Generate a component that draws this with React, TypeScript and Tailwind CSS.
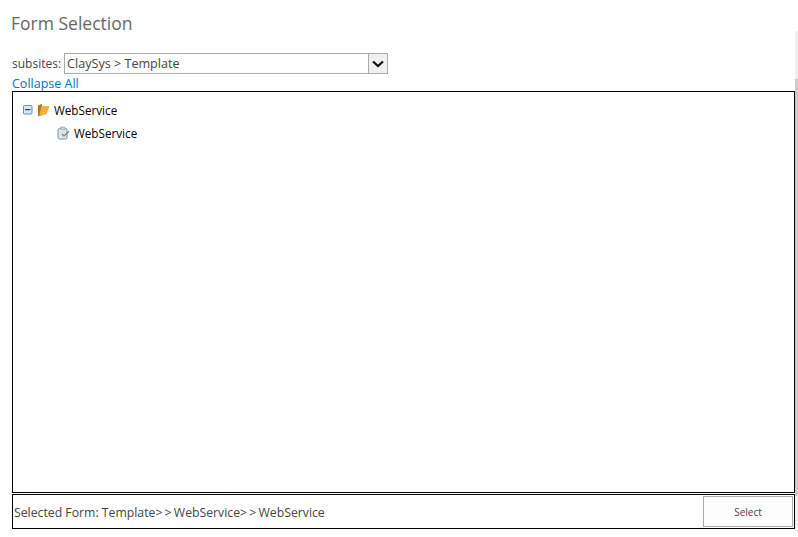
export default function App() {
  return (
    <div className="h-[537px] w-[798px] overflow-hidden bg-white font-['Open_Sans','Noto_Sans',sans-serif] text-[#444]">
      <div className="flex">
        <div className="w-[795px] shrink-0">
          <h1 className="ml-[11px] pt-[11px] text-[17.5px] leading-[24px] text-[#666]">Form Selection</h1>
          <div className="ml-[12px] mt-[18px] flex h-[21px] items-center">
            <span className="text-[12px]">subsites:</span>
            <div className="ml-[3px] flex h-[21px] w-[324px] items-center border border-[#ababab] bg-white pl-[2px] text-[12.6px]">
              <span className="flex-1 pt-[2px]">ClaySys &gt; Template</span>
              <span className="flex h-[19px] w-[19px] items-center justify-center border-l border-[#ababab] bg-[#f0f0f0]">
                <svg width="12" height="8" viewBox="0 0 12 8">
                  <path d="M1 1.5 6 6 11 1.5" fill="none" stroke="#111" strokeWidth="2.2" />
                </svg>
              </span>
            </div>
          </div>
          <a className="ml-[12px] block h-[17px] text-[12.5px] leading-[20px] text-[#0072c6]">Collapse All</a>
          <div className="ml-[12px] h-[402px] w-[783px] border border-black pl-[10px] pt-[9px]">
            <div className="flex h-[20px] items-center text-[11.7px] text-black">
              <svg width="10" height="10" viewBox="0 0 10 10" className="mb-[3px] shrink-0">
                <rect x="0.5" y="0.5" width="8.5" height="8.5" rx="1" fill="#dbe6f1" stroke="#5b8fc0" />
                <path d="M2 4.7H7.5" stroke="#222" />
              </svg>
              <svg width="13" height="14" viewBox="0 0 13 14" className="mb-[3px] ml-[4px] shrink-0">
                <path d="M1 2.5 5 1v11L1 13.5Z" fill="#b5771b" />
                <path d="M4.5 3H12.5L9.5 11 2 13.5Z" fill="#eeb13c" />
              </svg>
              <span className="ml-[4px]">WebService</span>
            </div>
            <div className="ml-[34px] mt-[3px] flex h-[20px] items-center text-[11.7px] text-black">
              <svg width="13" height="14" viewBox="0 0 13 14" className="mb-[2px] shrink-0">
                <rect x="1" y="2.5" width="9" height="10.5" rx="1.5" fill="#dfe6e8" stroke="#7d9299" />
                <rect x="3.5" y="1" width="4.5" height="2.5" fill="#c9d2d5" stroke="#8b9ca1" strokeWidth="0.5" />
                <path d="M5 8 7 10 12 5.5" fill="none" stroke="#5d8c96" strokeWidth="1.2" />
              </svg>
              <span className="ml-[4px]">WebService</span>
            </div>
          </div>
          <div className="ml-[12px] mt-[1px] flex h-[35px] w-[783px] items-center justify-between border border-black pl-[1px] pr-[1px]">
            <span className="pt-[3px] text-[12.25px]">
              Selected Form: Template<span className="tracking-[2.2px]">&gt;&gt;</span>WebService
              <span className="tracking-[2.2px]">&gt;&gt;</span>WebService
            </span>
            <button className="h-[31px] w-[90px] border border-[#ababab] bg-[#fdfdfd] pt-[1px] text-[10px] text-[#444]">Select</button>
          </div>
        </div>
        <div className="mt-[31px] h-[497px] w-[3px] shrink-0 bg-[#f0f0f0]">
          <div className="mt-[48px] h-[417px] bg-[#cdcdcd]" />
        </div>
      </div>
    </div>
  );
}
